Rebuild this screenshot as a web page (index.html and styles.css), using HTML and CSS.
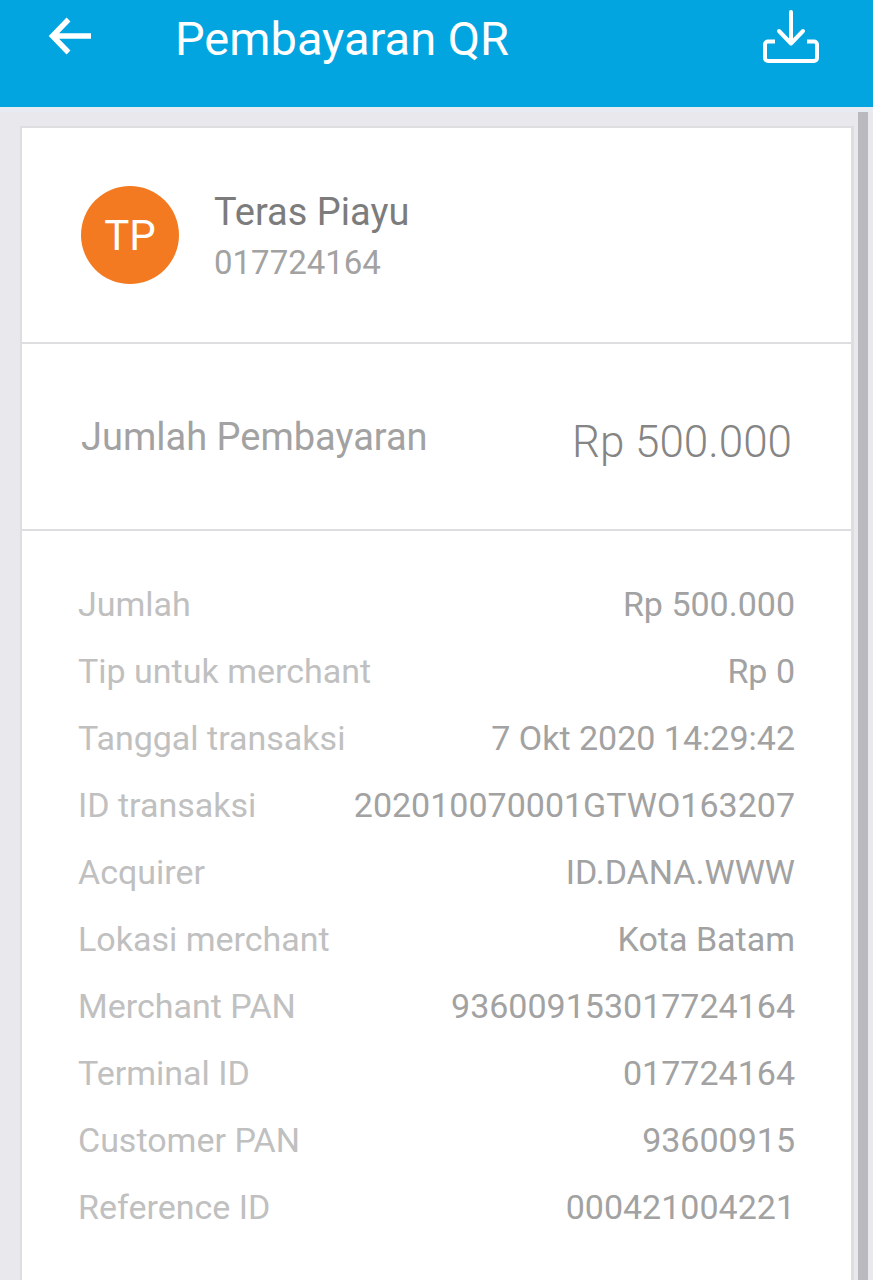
FILE: index.html
```html
<!DOCTYPE html>
<html lang="id">
<head>
<meta charset="utf-8">
<meta name="viewport" content="width=device-width, initial-scale=1">
<title>Pembayaran QR</title>
<link rel="stylesheet" href="styles.css">
</head>
<body>
<header class="topbar">
  <button class="icon-button back" type="button" aria-label="Kembali">
    <svg width="44" height="40" viewBox="0 0 44 40" fill="none" stroke="currentColor" stroke-width="5.4"><path d="M43 20H5M20.500 3.500L4.500 20l16 16.500"/></svg>
  </button>
  <h1 class="title">Pembayaran QR</h1>
  <button class="icon-button" type="button" aria-label="Unduh">
    <svg width="58" height="56" viewBox="0 0 58 56" fill="none" stroke="currentColor" stroke-width="4" stroke-linecap="round" stroke-linejoin="round"><path d="M29 3v31M17 22l12 12.500L41 22"/><path stroke-linecap="butt" d="M13 32.500H6a3 3 0 0 0-3 3V49a3 3 0 0 0 3 3h46a3 3 0 0 0 3-3V35.500a3 3 0 0 0-3-3h-7"/></svg>
  </button>
</header>
<main class="page">
  <article class="receipt">
    <section class="merchant">
      <div class="avatar">TP</div>
      <div class="merchant-info">
        <h2 class="merchant-name">Teras Piayu</h2>
        <p class="merchant-id">017724164</p>
      </div>
    </section>
    <section class="total">
      <span class="total-label">Jumlah Pembayaran</span>
      <span class="total-value">Rp 500.000</span>
    </section>
    <dl class="details">
      <div class="row"><dt>Jumlah</dt><dd>Rp 500.000</dd></div>
      <div class="row"><dt>Tip untuk merchant</dt><dd>Rp 0</dd></div>
      <div class="row"><dt>Tanggal transaksi</dt><dd>7 Okt 2020 14:29:42</dd></div>
      <div class="row"><dt>ID transaksi</dt><dd>202010070001GTWO163207</dd></div>
      <div class="row"><dt>Acquirer</dt><dd>ID.DANA.WWW</dd></div>
      <div class="row"><dt>Lokasi merchant</dt><dd>Kota Batam</dd></div>
      <div class="row"><dt>Merchant PAN</dt><dd>936009153017724164</dd></div>
      <div class="row"><dt>Terminal ID</dt><dd>017724164</dd></div>
      <div class="row"><dt>Customer PAN</dt><dd>93600915</dd></div>
      <div class="row"><dt>Reference ID</dt><dd>000421004221</dd></div>
    </dl>
  </article>
  <div class="scrollbar"></div>
</main>
</body>
</html>
```

FILE: styles.css
```css
* { box-sizing: border-box; margin: 0; padding: 0; }
body {
  min-height: 100vh;
  display: flex;
  flex-direction: column;
  background: #e9e9ed;
  color: #a2a2a2;
  font-family: Roboto, "Liberation Sans", sans-serif;
}
.topbar {
  display: flex;
  align-items: flex-start;
  height: 107px;
  padding: 9px 53px 0 48px;
  background: #02a5e0;
  color: #fff;
}
.icon-button { display: flex; border: 0; background: none; color: inherit; cursor: pointer; }
.back { padding-top: 7px; }
.title { flex: 1; padding-left: 83px; font-size: 47px; line-height: 60px; font-weight: 400; }
.page {
  flex: 1;
  display: flex;
  padding: 0 5px 0 20px;
  border-top: 5px solid #e6ecf2;
}
.receipt {
  flex: 1;
  margin-top: 14px;
  border: 2px solid #dedee0;
  border-right-width: 3px;
  border-bottom: 0;
  background: #fff;
}
.scrollbar { width: 10px; margin-left: 4px; background: #b9b9be; }
.merchant {
  display: flex;
  align-items: center;
  gap: 35px;
  height: 216px;
  padding: 0 59px;
  border-bottom: 2px solid #dedee0;
}
.avatar {
  display: grid;
  place-items: center;
  width: 98px;
  height: 98px;
  border-radius: 50%;
  background: #f37a20;
  color: #fff;
  font-size: 42px;
}
.merchant-info { padding-top: 3px; }
.merchant-name { color: #7c7c7c; font-size: 38px; line-height: 52px; font-weight: 400; }
.merchant-id { font-size: 33px; line-height: 50px; }
.total {
  display: flex;
  align-items: center;
  justify-content: space-between;
  height: 187px;
  padding: 0 59px;
  border-bottom: 2px solid #dedee0;
}
.total-label { font-size: 38px; }
.total-value { padding-top: 10px; color: #858585; font-size: 44px; font-weight: 300; }
.details { padding: 40px 56px; }
.row { display: flex; justify-content: space-between; font-size: 34px; line-height: 67px; }
.row dt { color: #c0c0c0; }
```
